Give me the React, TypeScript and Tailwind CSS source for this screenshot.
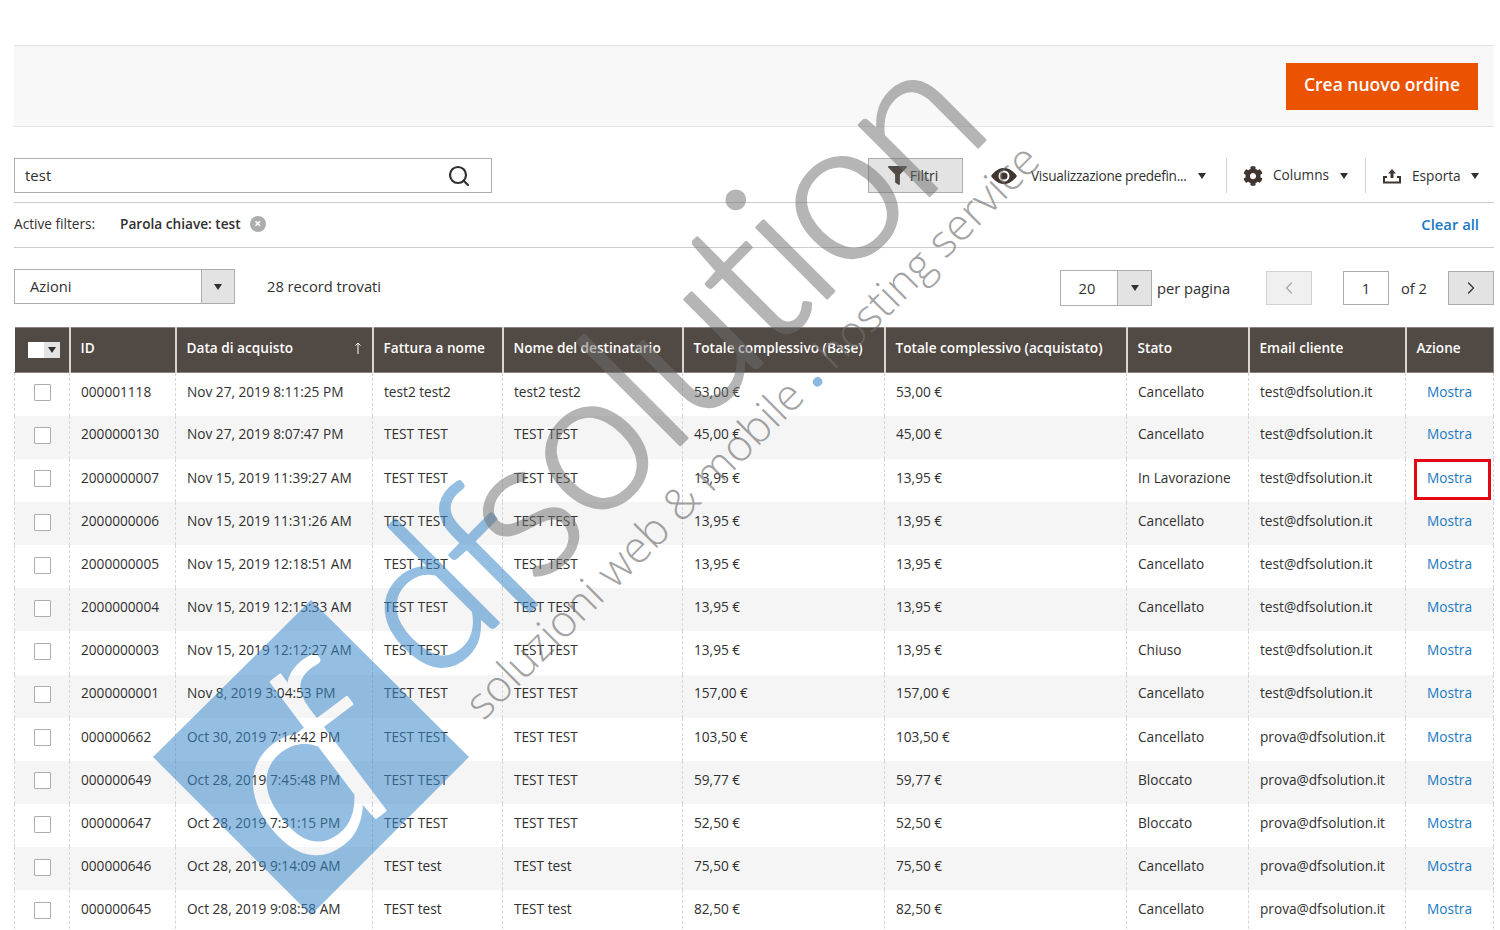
import { FaCog, FaFilter } from 'react-icons/fa';
import { Search, ChevronLeft, ChevronRight } from 'lucide-react';

const rows = [
  ['000001118', 'Nov 27, 2019 8:11:25 PM', 'test2 test2', 'test2 test2', '53,00 €', 'Cancellato', 'test@dfsolution.it'],
  ['2000000130', 'Nov 27, 2019 8:07:47 PM', 'TEST TEST', 'TEST TEST', '45,00 €', 'Cancellato', 'test@dfsolution.it'],
  ['2000000007', 'Nov 15, 2019 11:39:27 AM', 'TEST TEST', 'TEST TEST', '13,95 €', 'In Lavorazione', 'test@dfsolution.it'],
  ['2000000006', 'Nov 15, 2019 11:31:26 AM', 'TEST TEST', 'TEST TEST', '13,95 €', 'Cancellato', 'test@dfsolution.it'],
  ['2000000005', 'Nov 15, 2019 12:18:51 AM', 'TEST TEST', 'TEST TEST', '13,95 €', 'Cancellato', 'test@dfsolution.it'],
  ['2000000004', 'Nov 15, 2019 12:15:33 AM', 'TEST TEST', 'TEST TEST', '13,95 €', 'Cancellato', 'test@dfsolution.it'],
  ['2000000003', 'Nov 15, 2019 12:12:27 AM', 'TEST TEST', 'TEST TEST', '13,95 €', 'Chiuso', 'test@dfsolution.it'],
  ['2000000001', 'Nov 8, 2019 3:04:53 PM', 'TEST TEST', 'TEST TEST', '157,00 €', 'Cancellato', 'test@dfsolution.it'],
  ['000000662', 'Oct 30, 2019 7:14:42 PM', 'TEST TEST', 'TEST TEST', '103,50 €', 'Cancellato', 'prova@dfsolution.it'],
  ['000000649', 'Oct 28, 2019 7:45:48 PM', 'TEST TEST', 'TEST TEST', '59,77 €', 'Bloccato', 'prova@dfsolution.it'],
  ['000000647', 'Oct 28, 2019 7:31:15 PM', 'TEST TEST', 'TEST TEST', '52,50 €', 'Bloccato', 'prova@dfsolution.it'],
  ['000000646', 'Oct 28, 2019 9:14:09 AM', 'TEST test', 'TEST test', '75,50 €', 'Cancellato', 'prova@dfsolution.it'],
  ['000000645', 'Oct 28, 2019 9:08:58 AM', 'TEST test', 'TEST test', '82,50 €', 'Cancellato', 'prova@dfsolution.it'],
];

function Caret() {
  return <span className="inline-block w-0 h-0 border-x-[4.5px] border-x-transparent border-t-[6px] border-t-[#303030]" />;
}

function HeaderCell({ label, sorted, last }: { label: string; sorted?: boolean; last?: boolean }) {
  return (
    <th className={`border-l-2 border-l-[#d8d5d2] border-y border-y-[#8a837f] bg-[#514943] pl-[10px] pr-[11px] pb-[4px] text-left text-[13.65px] font-semibold text-white whitespace-nowrap ${last ? 'border-r border-r-[#8a837f]' : ''}`}>
      <div className="flex items-center justify-between">
        {label}
        {sorted && (
          <svg width="8" height="12" viewBox="0 0 8 12" className="-mr-[1px]" fill="none" stroke="currentColor" strokeWidth="1">
            <path d="M4 12V1M1.500 3.500L4 1l2.500 2.500" />
          </svg>
        )}
      </div>
    </th>
  );
}

function Cell({ children }: { children: React.ReactNode }) {
  return (
    <td className="border-l border-dashed border-l-[#d6d6d6] px-[11px] pb-[5px] text-[13.65px] text-[#303030] whitespace-nowrap">{children}</td>
  );
}

// logo stamped over the page, letters stay real text
function Watermark() {
  const logoFont = { fontFamily: 'Lato', fontWeight: 300 };
  return (
    <div className="absolute inset-0 z-10 overflow-hidden pointer-events-none">
      <svg width="1500" height="930" className="absolute left-0 top-0">
        <mask id="diamond-cut" maskUnits="userSpaceOnUse" x="0" y="0" width="1500" height="930">
          <rect width="1500" height="930" fill="#fff" />
          <g fill="#000" stroke="#000" strokeWidth="3" strokeLinejoin="round" style={logoFont} fontSize="235">
            <text transform="translate(295 878) rotate(-37)">d</text>
            <text transform="translate(355 833) rotate(-37)">f</text>
          </g>
        </mask>
        <polygon points="311,600 469,757 311,915 153,757" fill="#3d8acb" fillOpacity="0.55" mask="url(#diamond-cut)" />
        <g opacity="0.55" fill="#3d8acb" stroke="#3d8acb" strokeWidth="3" strokeLinejoin="round" style={logoFont} fontSize="200">
          <text transform="translate(432 689) rotate(-45)">d</text>
          <text transform="translate(514 627) rotate(-45)">f</text>
        </g>
        <g opacity="0.5" fill="#6e6e6e" stroke="#6e6e6e" strokeWidth="3" strokeLinejoin="round" style={logoFont} fontSize="200">
          <text transform="translate(536 589) rotate(-45)" letterSpacing="-5">solution</text>
        </g>
      </svg>
      <div className="absolute left-[487px] top-[681px] origin-bottom-left -rotate-45 font-['Open_Sans'] font-light text-[44px] leading-none whitespace-nowrap text-[#6e6e6e]/65">
        soluzioni web &amp; mobile <span className="text-[56px] font-bold leading-[0] text-[#3d8acb]/60">.</span> hosting service
      </div>
    </div>
  );
}

export default function App() {
  return (
    <div className="relative w-[1500px] h-[930px] overflow-hidden bg-white pl-[14px] pr-[6px] pt-[45px] font-['Open_Sans',sans-serif] text-[13.65px] text-[#303030]">
      <div className="flex h-[82px] items-center justify-end border-y border-y-[#e3e3e3] bg-[#f8f8f8] pr-[16px]">
        <button className="h-[47px] w-[192px] bg-[#eb5202] pb-[3px] text-[17.5px] font-semibold text-white">Crea nuovo ordine</button>
      </div>

      <div className="flex h-[76px] items-start border-b border-b-[#cccccc] pt-[31px]">
        <div className="flex h-[35px] w-[478px] items-center justify-between border border-[#adadad] pl-[10px] pr-[20px] text-[15px]">
          test
          <Search size={24} strokeWidth={2.2} />
        </div>
        <button className="ml-[376px] flex h-[35px] w-[95px] items-center justify-center gap-[3px] border border-[#adadad] bg-[#e3e3e3] pr-[5px] text-[14px]">
          <FaFilter size={19} className="text-[#514943]" />
          Filtri
        </button>
        <div className="ml-[28px] flex h-[35px] w-[236px] items-center border-r border-r-[#d1d1d1]">
          <svg width="26" height="16" viewBox="0 0 26 16" className="text-[#41362f]">
            <path fill="currentColor" d="M0 8C4 2.600 8.500 0 13 0s9 2.600 13 8c-4 5.400-8.500 8-13 8S4 13.400 0 8z" />
            <circle cx="13" cy="8" r="5.500" fill="#fff" />
            <circle cx="13" cy="8" r="3.500" fill="currentColor" />
          </svg>
          <span className="ml-[14px] pt-[1px] tracking-[-0.3px]">Visualizzazione predefin...</span>
          <span className="ml-[11px] flex"><Caret /></span>
        </div>
        <div className="flex h-[35px] w-[139px] items-center border-r border-r-[#d1d1d1] pl-[16px]">
          <FaCog size={20} className="text-[#41362f]" />
          <span className="ml-[10px] pb-[1px]">Columns</span>
          <span className="ml-[11px] flex"><Caret /></span>
        </div>
        <div className="flex h-[35px] items-center pl-[17px]">
          <svg width="18" height="16" viewBox="0 0 18 16" className="text-[#41362f]" fill="currentColor">
            <path d="M9 1l4 4.500h-2.500V10h-3V5.500H5z" />
            <path d="M0 8h4v2H2v3.500h14V10h-2V8h4v7.500H0z" />
          </svg>
          <span className="ml-[11px] pt-[1px]">Esporta</span>
          <span className="ml-[10px] flex"><Caret /></span>
        </div>
      </div>

      <div className="flex h-[45px] items-center border-b border-b-[#cccccc] pb-[2px] pr-[15px]">
        <span className="w-[106px]">Active filters:</span>
        <span className="font-semibold">Parola chiave: test</span>
        <span className="ml-[9px] flex h-[16px] w-[16px] items-center justify-center rounded-full bg-[#adadad] text-[12px] font-bold leading-none text-white">×</span>
        <a className="ml-auto text-[14.8px] font-semibold text-[#1979c3]">Clear all</a>
      </div>

      <div className="flex h-[79px] items-start pt-[21px] text-[14.7px]">
        <div className="flex h-[35px] w-[221px] border border-[#adadad]">
          <span className="flex flex-1 items-center pb-[1px] pl-[15px]">Azioni</span>
          <span className="flex w-[33px] items-center justify-center border-l border-l-[#adadad] bg-[#e3e3e3]"><Caret /></span>
        </div>
        <span className="ml-[32px] flex h-[35px] items-center pb-[1px]">28 record trovati</span>
        <div className="ml-auto mt-[1px] flex h-[36px] w-[92px] border border-[#adadad]">
          <span className="flex flex-1 items-center justify-center pr-[4px]">20</span>
          <span className="flex w-[34px] items-center justify-center border-l border-l-[#adadad] bg-[#e3e3e3]"><Caret /></span>
        </div>
        <span className="ml-[5px] mt-[1px] flex h-[36px] w-[109px] items-center">per pagina</span>
        <span className="mt-[2px] flex h-[34px] w-[46px] items-center justify-center border border-[#d1d1d1] bg-[#f0f0f0] text-[#a8a8a8]"><ChevronLeft size={20} strokeWidth={1.5} /></span>
        <span className="ml-[31px] mt-[2px] flex h-[34px] w-[46px] items-center justify-center border border-[#adadad]">1</span>
        <span className="ml-[12px] mt-[2px] flex h-[34px] w-[47px] items-center">of 2</span>
        <span className="mt-[2px] flex h-[34px] w-[46px] items-center justify-center border border-[#adadad] bg-[#e3e3e3]"><ChevronRight size={20} strokeWidth={1.5} /></span>
      </div>

      <table className="w-[1479px] table-fixed border-collapse">
        <colgroup>
          <col className="w-[55px]" />
          <col className="w-[106px]" />
          <col className="w-[197px]" />
          <col className="w-[130px]" />
          <col className="w-[180px]" />
          <col className="w-[202px]" />
          <col className="w-[242px]" />
          <col className="w-[122px]" />
          <col className="w-[157px]" />
          <col className="w-[88px]" />
        </colgroup>
        <thead>
          <tr className="h-[45px]">
            <th className="border-y border-y-[#8a837f] bg-[#514943]">
              <div className="ml-[13px] flex h-[16px] w-[32px]">
                <span className="w-[16px] bg-white" />
                <span className="flex w-[16px] items-center justify-center bg-[#e3e3e3]"><Caret /></span>
              </div>
            </th>
            <HeaderCell label="ID" />
            <HeaderCell label="Data di acquisto" sorted />
            <HeaderCell label="Fattura a nome" />
            <HeaderCell label="Nome del destinatario" />
            <HeaderCell label="Totale complessivo (Base)" />
            <HeaderCell label="Totale complessivo (acquistato)" />
            <HeaderCell label="Stato" />
            <HeaderCell label="Email cliente" />
            <HeaderCell label="Azione" last />
          </tr>
        </thead>
        <tbody>
          {rows.map((r, i) => (
            <tr key={r[0]} className={`h-[43.17px] ${i % 2 ? 'bg-[#f5f5f5]' : 'bg-white'}`}>
              <td className="border-l border-dashed border-l-[#d6d6d6] pb-[3px]">
                <span className="ml-[19px] block h-[17px] w-[17px] rounded-[1px] border border-[#adadad] bg-white" />
              </td>
              <Cell>{r[0]}</Cell>
              <Cell>{r[1]}</Cell>
              <Cell>{r[2]}</Cell>
              <Cell>{r[3]}</Cell>
              <Cell>{r[4]}</Cell>
              <Cell>{r[4]}</Cell>
              <Cell>{r[5]}</Cell>
              <Cell>{r[6]}</Cell>
              <td className="relative border-x border-dashed border-x-[#d6d6d6] pb-[5px] text-center text-[13.65px] text-[#1979c3]">
                Mostra
                {i === 2 && <span className="absolute left-[8px] top-0 h-[41px] w-[77px] border-[3px] border-[#e30613]" />}
              </td>
            </tr>
          ))}
        </tbody>
      </table>

      <Watermark />
    </div>
  );
}
